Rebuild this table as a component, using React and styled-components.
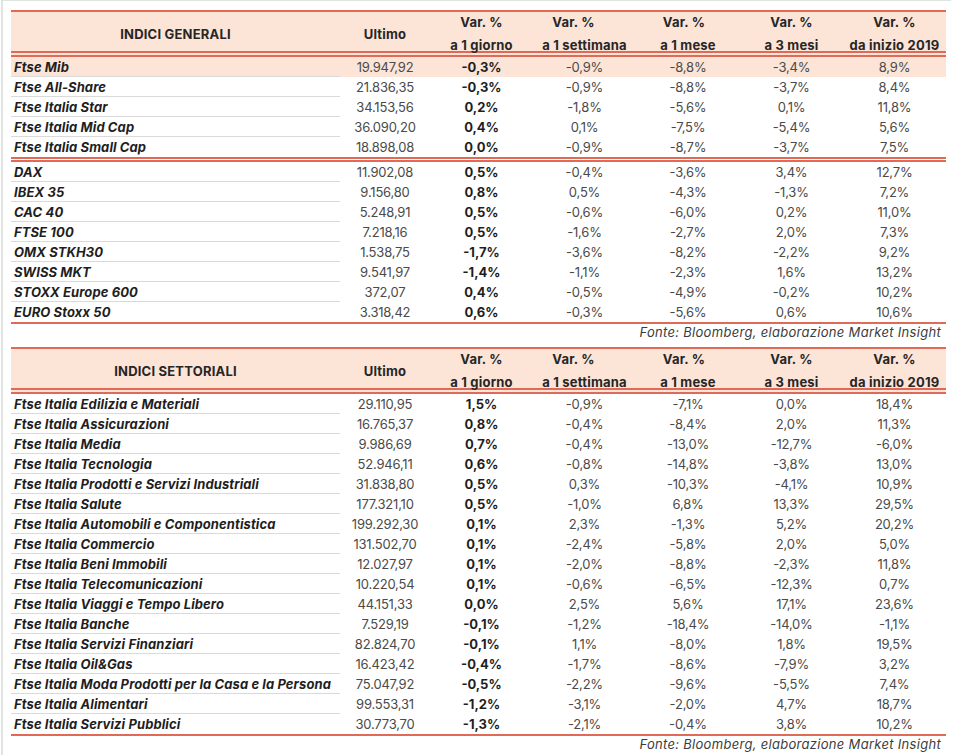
import React from "react";
import styled, { createGlobalStyle } from "styled-components";

const GlobalStyle = createGlobalStyle`
  body {
    margin: 0;
    background: #ffffff;
    font-family: Inter, "Liberation Sans", sans-serif;
    font-size: 13px;
    color: #262626;
  }
`;

const RED = "#e06a58";
const PEACH = "#fce4d6";
const COLS = "329px 90px 103px 103px 104px 103px 103px";

const Frame = styled.div`
  margin-left: 1px;
  width: 950px;
  height: 755px;
  box-sizing: border-box;
  border-top: 1px solid #dde6df;
  border-left: 2px solid #e1e5e1;
  padding: 9px 0 0 8px;
`;

const Table = styled.div`
  width: 935px;
  border-top: 2px solid ${RED};
  border-bottom: 2px solid ${RED};
`;

const Header = styled.div`
  display: grid;
  grid-template-columns: ${COLS};
  height: 39px;
  background: ${PEACH};
  font-weight: 700;
  color: #262626;
  letter-spacing: 0.2px;
`;

const HeadCell = styled.div`
  display: flex;
  align-items: center;
  justify-content: center;
  white-space: nowrap;
`;

const HeadStack = styled.div`
  display: flex;
  flex-direction: column;
  align-items: center;
  white-space: nowrap;
`;

const HeadLine = styled.span`
  line-height: 20px;
  margin-top: ${(p) => (p.$second ? "3px" : "0")};
  padding-right: ${(p) => p.$shift || 0}px;
`;

const DoubleRule = styled.div`
  height: 2px;
  border-top: 2px solid ${RED};
  border-bottom: 2px solid ${RED};
  background: ${(p) => (p.$gap ? p.$gap : "#ffffff")};
`;

const MidRule = styled.div`
  height: 1px;
  border-top: 2px solid ${RED};
  border-bottom: 2px solid ${RED};
  background: #ffffff;
`;

const Row = styled.div`
  display: grid;
  grid-template-columns: ${COLS};
  height: 20px;
  background: ${(p) => (p.$highlight ? PEACH : "transparent")};
`;

const Name = styled.div`
  box-sizing: border-box;
  height: 20px;
  padding-left: 3px;
  line-height: 21px;
  font-weight: 700;
  font-style: italic;
  letter-spacing: 0.1px;
  color: #1e1e1e;
  white-space: nowrap;
  border-bottom: 1px solid ${(p) => (p.$last ? "transparent" : "#dadada")};
`;

const Value = styled.div`
  text-align: center;
  line-height: 20px;
  letter-spacing: ${(p) => (p.$bold ? "0" : "-0.2px")};
  font-weight: ${(p) => (p.$bold ? 700 : 400)};
  color: ${(p) => (p.$bold ? "#1e1e1e" : "#4a4a4a")};
  white-space: nowrap;
`;

const Source = styled.div`
  width: 935px;
  height: 16px;
  line-height: 16px;
  margin-bottom: ${(p) => p.$space || 0}px;
  box-sizing: border-box;
  padding-right: 5px;
  text-align: right;
  font-style: italic;
  letter-spacing: 0.3px;
  color: #3c3c3c;
`;

const generali = [
  [
    ["Ftse Mib", "19.947,92", "-0,3%", "-0,9%", "-8,8%", "-3,4%", "8,9%", true],
    ["Ftse All-Share", "21.836,35", "-0,3%", "-0,9%", "-8,8%", "-3,7%", "8,4%"],
    ["Ftse Italia Star", "34.153,56", "0,2%", "-1,8%", "-5,6%", "0,1%", "11,8%"],
    ["Ftse Italia Mid Cap", "36.090,20", "0,4%", "0,1%", "-7,5%", "-5,4%", "5,6%"],
    ["Ftse Italia Small Cap", "18.898,08", "0,0%", "-0,9%", "-8,7%", "-3,7%", "7,5%"],
  ],
  [
    ["DAX", "11.902,08", "0,5%", "-0,4%", "-3,6%", "3,4%", "12,7%"],
    ["IBEX 35", "9.156,80", "0,8%", "0,5%", "-4,3%", "-1,3%", "7,2%"],
    ["CAC 40", "5.248,91", "0,5%", "-0,6%", "-6,0%", "0,2%", "11,0%"],
    ["FTSE 100", "7.218,16", "0,5%", "-1,6%", "-2,7%", "2,0%", "7,3%"],
    ["OMX STKH30", "1.538,75", "-1,7%", "-3,6%", "-8,2%", "-2,2%", "9,2%"],
    ["SWISS MKT", "9.541,97", "-1,4%", "-1,1%", "-2,3%", "1,6%", "13,2%"],
    ["STOXX Europe 600", "372,07", "0,4%", "-0,5%", "-4,9%", "-0,2%", "10,2%"],
    ["EURO Stoxx 50", "3.318,42", "0,6%", "-0,3%", "-5,6%", "0,6%", "10,6%"],
  ],
];

const settoriali = [
  [
    ["Ftse Italia Edilizia e Materiali", "29.110,95", "1,5%", "-0,9%", "-7,1%", "0,0%", "18,4%"],
    ["Ftse Italia Assicurazioni", "16.765,37", "0,8%", "-0,4%", "-8,4%", "2,0%", "11,3%"],
    ["Ftse Italia Media", "9.986,69", "0,7%", "-0,4%", "-13,0%", "-12,7%", "-6,0%"],
    ["Ftse Italia Tecnologia", "52.946,11", "0,6%", "-0,8%", "-14,8%", "-3,8%", "13,0%"],
    ["Ftse Italia Prodotti e Servizi Industriali", "31.838,80", "0,5%", "0,3%", "-10,3%", "-4,1%", "10,9%"],
    ["Ftse Italia Salute", "177.321,10", "0,5%", "-1,0%", "6,8%", "13,3%", "29,5%"],
    ["Ftse Italia Automobili e Componentistica", "199.292,30", "0,1%", "2,3%", "-1,3%", "5,2%", "20,2%"],
    ["Ftse Italia Commercio", "131.502,70", "0,1%", "-2,4%", "-5,8%", "2,0%", "5,0%"],
    ["Ftse Italia Beni Immobili", "12.027,97", "0,1%", "-2,0%", "-8,8%", "-2,3%", "11,8%"],
    ["Ftse Italia Telecomunicazioni", "10.220,54", "0,1%", "-0,6%", "-6,5%", "-12,3%", "0,7%"],
    ["Ftse Italia Viaggi e Tempo Libero", "44.151,33", "0,0%", "2,5%", "5,6%", "17,1%", "23,6%"],
    ["Ftse Italia Banche", "7.529,19", "-0,1%", "-1,2%", "-18,4%", "-14,0%", "-1,1%"],
    ["Ftse Italia Servizi Finanziari", "82.824,70", "-0,1%", "1,1%", "-8,0%", "1,8%", "19,5%"],
    ["Ftse Italia Oil&Gas", "16.423,42", "-0,4%", "-1,7%", "-8,6%", "-7,9%", "3,2%"],
    ["Ftse Italia Moda Prodotti per la Casa e la Persona", "75.047,92", "-0,5%", "-2,2%", "-9,6%", "-5,5%", "7,4%"],
    ["Ftse Italia Alimentari", "99.553,31", "-1,2%", "-3,1%", "-2,0%", "4,7%", "18,7%"],
    ["Ftse Italia Servizi Pubblici", "30.773,70", "-1,3%", "-2,1%", "-0,4%", "3,8%", "10,2%"],
  ],
];

const periods = [
  ["a 1 giorno", 0],
  ["a 1 settimana", 22],
  ["a 1 mese", 8],
  ["a 3 mesi", 0],
  ["da inizio 2019", 0],
];

function IndexTable({ title, groups }) {
  return (
    <Table>
      <Header>
        <HeadCell>{title}</HeadCell>
        <HeadCell>Ultimo</HeadCell>
        {periods.map(([label, shift]) => (
          <HeadStack key={label}>
            <HeadLine $shift={shift}>Var. %</HeadLine>
            <HeadLine $second>{label}</HeadLine>
          </HeadStack>
        ))}
      </Header>
      <DoubleRule $gap={PEACH} />
      {groups.map((rows, g) => (
        <React.Fragment key={g}>
          {g > 0 && <MidRule />}
          {rows.map((r, i) => (
            <Row key={r[0]} $highlight={r[7]}>
              <Name $last={i === rows.length - 1}>{r[0]}</Name>
              <Value>{r[1]}</Value>
              <Value $bold>{r[2]}</Value>
              <Value>{r[3]}</Value>
              <Value>{r[4]}</Value>
              <Value>{r[5]}</Value>
              <Value>{r[6]}</Value>
            </Row>
          ))}
        </React.Fragment>
      ))}
    </Table>
  );
}

export default function App() {
  return (
    <>
      <GlobalStyle />
      <Frame>
        <IndexTable title="INDICI GENERALI" groups={generali} />
        <Source $space={7}>Fonte: Bloomberg, elaborazione Market Insight</Source>
        <IndexTable title="INDICI SETTORIALI" groups={settoriali} />
        <Source>Fonte: Bloomberg, elaborazione Market Insight</Source>
      </Frame>
    </>
  );
}
